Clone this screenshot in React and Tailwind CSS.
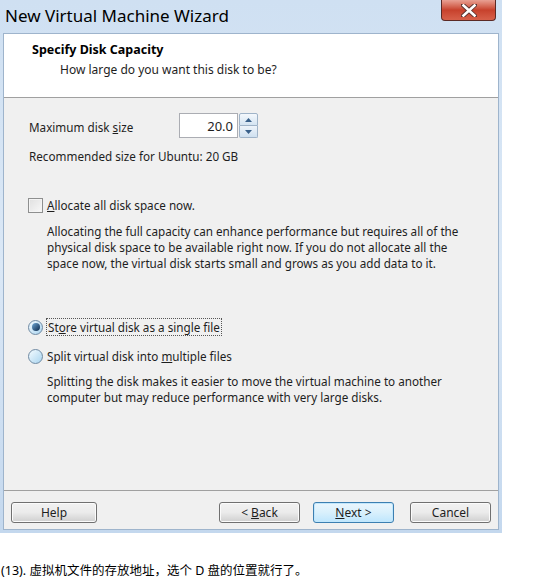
import React from "react";

const ui = { fontFamily: '"Noto Sans", "Open Sans", sans-serif' };

function Btn({ children, primary, className = "" }) {
  return (
    <div
      className={
        "h-[21px] rounded-[3px] border flex items-center justify-center text-[12px] text-[#1e1e1e] " +
        (primary
          ? "border-[#3c7fb1] bg-gradient-to-b from-[#eaf6fd] via-[#d9f0fc] to-[#bee6fd] shadow-[inset_0_0_0_1px_#c2e7fc] "
          : "border-[#707070] bg-gradient-to-b from-[#f2f2f2] via-[#ebebeb] to-[#cfcfcf] shadow-[inset_0_0_0_1px_#fbfbfb] ") +
        className
      }
    >
      {children}
    </div>
  );
}

function Radio({ checked }) {
  return (
    <div className="w-[15px] h-[15px] rounded-full border border-[#6f8aa3] bg-gradient-to-br from-[#f4fbff] to-[#a9d4ef] flex items-center justify-center shrink-0">
      {checked ? (
        <div className="w-[8px] h-[8px] rounded-full bg-gradient-to-br from-[#6fa8d6] to-[#0d2a4c]" />
      ) : null}
    </div>
  );
}

export default function App() {
  return (
    <div className="w-[554px] h-[582px] bg-white relative overflow-hidden" style={ui}>
      {/* Window frame */}
      <div className="w-[502px] h-[533px] flex flex-col bg-gradient-to-b from-[#cfe0f2] via-[#dbe8f6] to-[#c4d8ee]">
        {/* Title bar */}
        <div className="h-[33px] flex items-start justify-between relative">
          <div className="pl-[5px] pt-[5px] text-[17px] leading-[22px] text-black">
            New Virtual Machine Wizard
          </div>
          <div className="absolute left-[441px] top-0 w-[55px] h-[21px] rounded-b-[4px] border border-t-0 border-[#5b2a25] bg-gradient-to-b from-[#e8a093] via-[#c7412c] to-[#d7604a] flex items-center justify-center">
            <svg width="16" height="13" viewBox="0 0 16 13">
              <path
                d="M2 1 L14 12 M14 1 L2 12"
                stroke="#5a3330"
                strokeWidth="4.4"
                strokeLinecap="square"
              />
              <path
                d="M2.5 1.5 L13.5 11.5 M13.5 1.5 L2.5 11.5"
                stroke="#ffffff"
                strokeWidth="2.6"
                strokeLinecap="square"
              />
            </svg>
          </div>
        </div>

        {/* Client area */}
        <div className="mx-[3px] flex-1 flex flex-col border border-[#9eb4cc] bg-[#f0f0f0] mb-[3px]">
          {/* Header */}
          <div className="h-[64px] bg-white border-b border-[#a0a0a0] pl-[28px] pt-[7px]">
            <div className="text-[12.5px] font-bold leading-[18px] text-black">
              Specify Disk Capacity
            </div>
            <div className="pl-[28px] pt-[3px] text-[12px] leading-[16px] text-[#1e1e1e]">
              How large do you want this disk to be?
            </div>
          </div>

          {/* Body */}
          <div className="flex-1 pl-[24px] pr-[20px] pt-[15px] text-[11.7px] leading-[16px] text-[#1e1e1e]">
            <div className="flex items-center h-[25px]">
              <div className="w-[151px] pt-[3px] pl-[1px]">
                Maximum disk <span className="underline">s</span>ize
              </div>
              <div className="w-[59px] h-[25px] bg-white border border-[#abadb3] flex items-center justify-end pr-[4px] text-[13px]">
                20.0
              </div>
              <div className="w-[19px] h-[25px] flex flex-col ml-[1px]">
                <div className="flex-1 border border-[#9fb3c8] rounded-t-[2px] bg-gradient-to-b from-[#f4f8fc] to-[#d4e4f2] flex items-center justify-center">
                  <svg width="7" height="4" viewBox="0 0 7 4">
                    <path d="M0 4 L3.5 0 L7 4 Z" fill="#39608a" />
                  </svg>
                </div>
                <div className="flex-1 border border-t-0 border-[#9fb3c8] rounded-b-[2px] bg-gradient-to-b from-[#eef4fa] to-[#cfe0f0] flex items-center justify-center">
                  <svg width="7" height="4" viewBox="0 0 7 4">
                    <path d="M0 0 L3.5 4 L7 0 Z" fill="#39608a" />
                  </svg>
                </div>
              </div>
            </div>
            <div className="pt-[10px] pl-[1px]">Recommended size for Ubuntu: 20 GB</div>

            <div className="flex items-center gap-[4px] mt-[33px]">
              <div className="w-[15px] h-[15px] border border-[#8e8f8f] bg-gradient-to-br from-[#e0e0e0] to-[#f8f8f8] shadow-[inset_0_0_0_1px_#f4f4f4]" />
              <div>
                <span className="underline">A</span>llocate all disk space now.
              </div>
            </div>
            <div className="pl-[19px] pt-[10px]">
              Allocating the full capacity can enhance performance but requires all of the
              <br />
              physical disk space to be available right now. If you do not allocate all the
              <br />
              space now, the virtual disk starts small and grows as you add data to it.
            </div>

            <div className="flex items-center gap-[3px] mt-[47px]">
              <Radio checked />
              <div className="border border-dotted border-[#555] px-[1px] leading-[16px]">
                St<span className="underline">o</span>re virtual disk as a single file
              </div>
            </div>
            <div className="flex items-center gap-[4px] mt-[12px]">
              <Radio />
              <div>
                Split virtual disk into <span className="underline">m</span>ultiple files
              </div>
            </div>
            <div className="pl-[19px] pt-[9px]">
              Splitting the disk makes it easier to move the virtual machine to another
              <br />
              computer but may reduce performance with very large disks.
            </div>
          </div>

          {/* Button bar */}
          <div className="h-[39px] border-t border-[#a0a0a0] flex items-start pt-[11px] pl-[7px]">
            <Btn className="w-[86px]">Help</Btn>
            <div className="flex-1" />
            <Btn className="w-[81px]">
              &lt; <span className="underline ml-[3px]">B</span>ack
            </Btn>
            <Btn primary className="w-[81px] ml-[13px]">
              <span className="underline">N</span>ext &gt;
            </Btn>
            <Btn className="w-[81px] ml-[16px] mr-[7px]">Cancel</Btn>
          </div>
        </div>
      </div>

      {/* Caption */}
      <div
        className="absolute left-[1px] top-[563px] text-[12.5px] leading-[16px] text-black"
        style={{ fontFamily: '"Noto Sans", "Noto Sans CJK SC", sans-serif' }}
      >
        (13). 虚拟机文件的存放地址，选个 D 盘的位置就行了。
      </div>
    </div>
  );
}
